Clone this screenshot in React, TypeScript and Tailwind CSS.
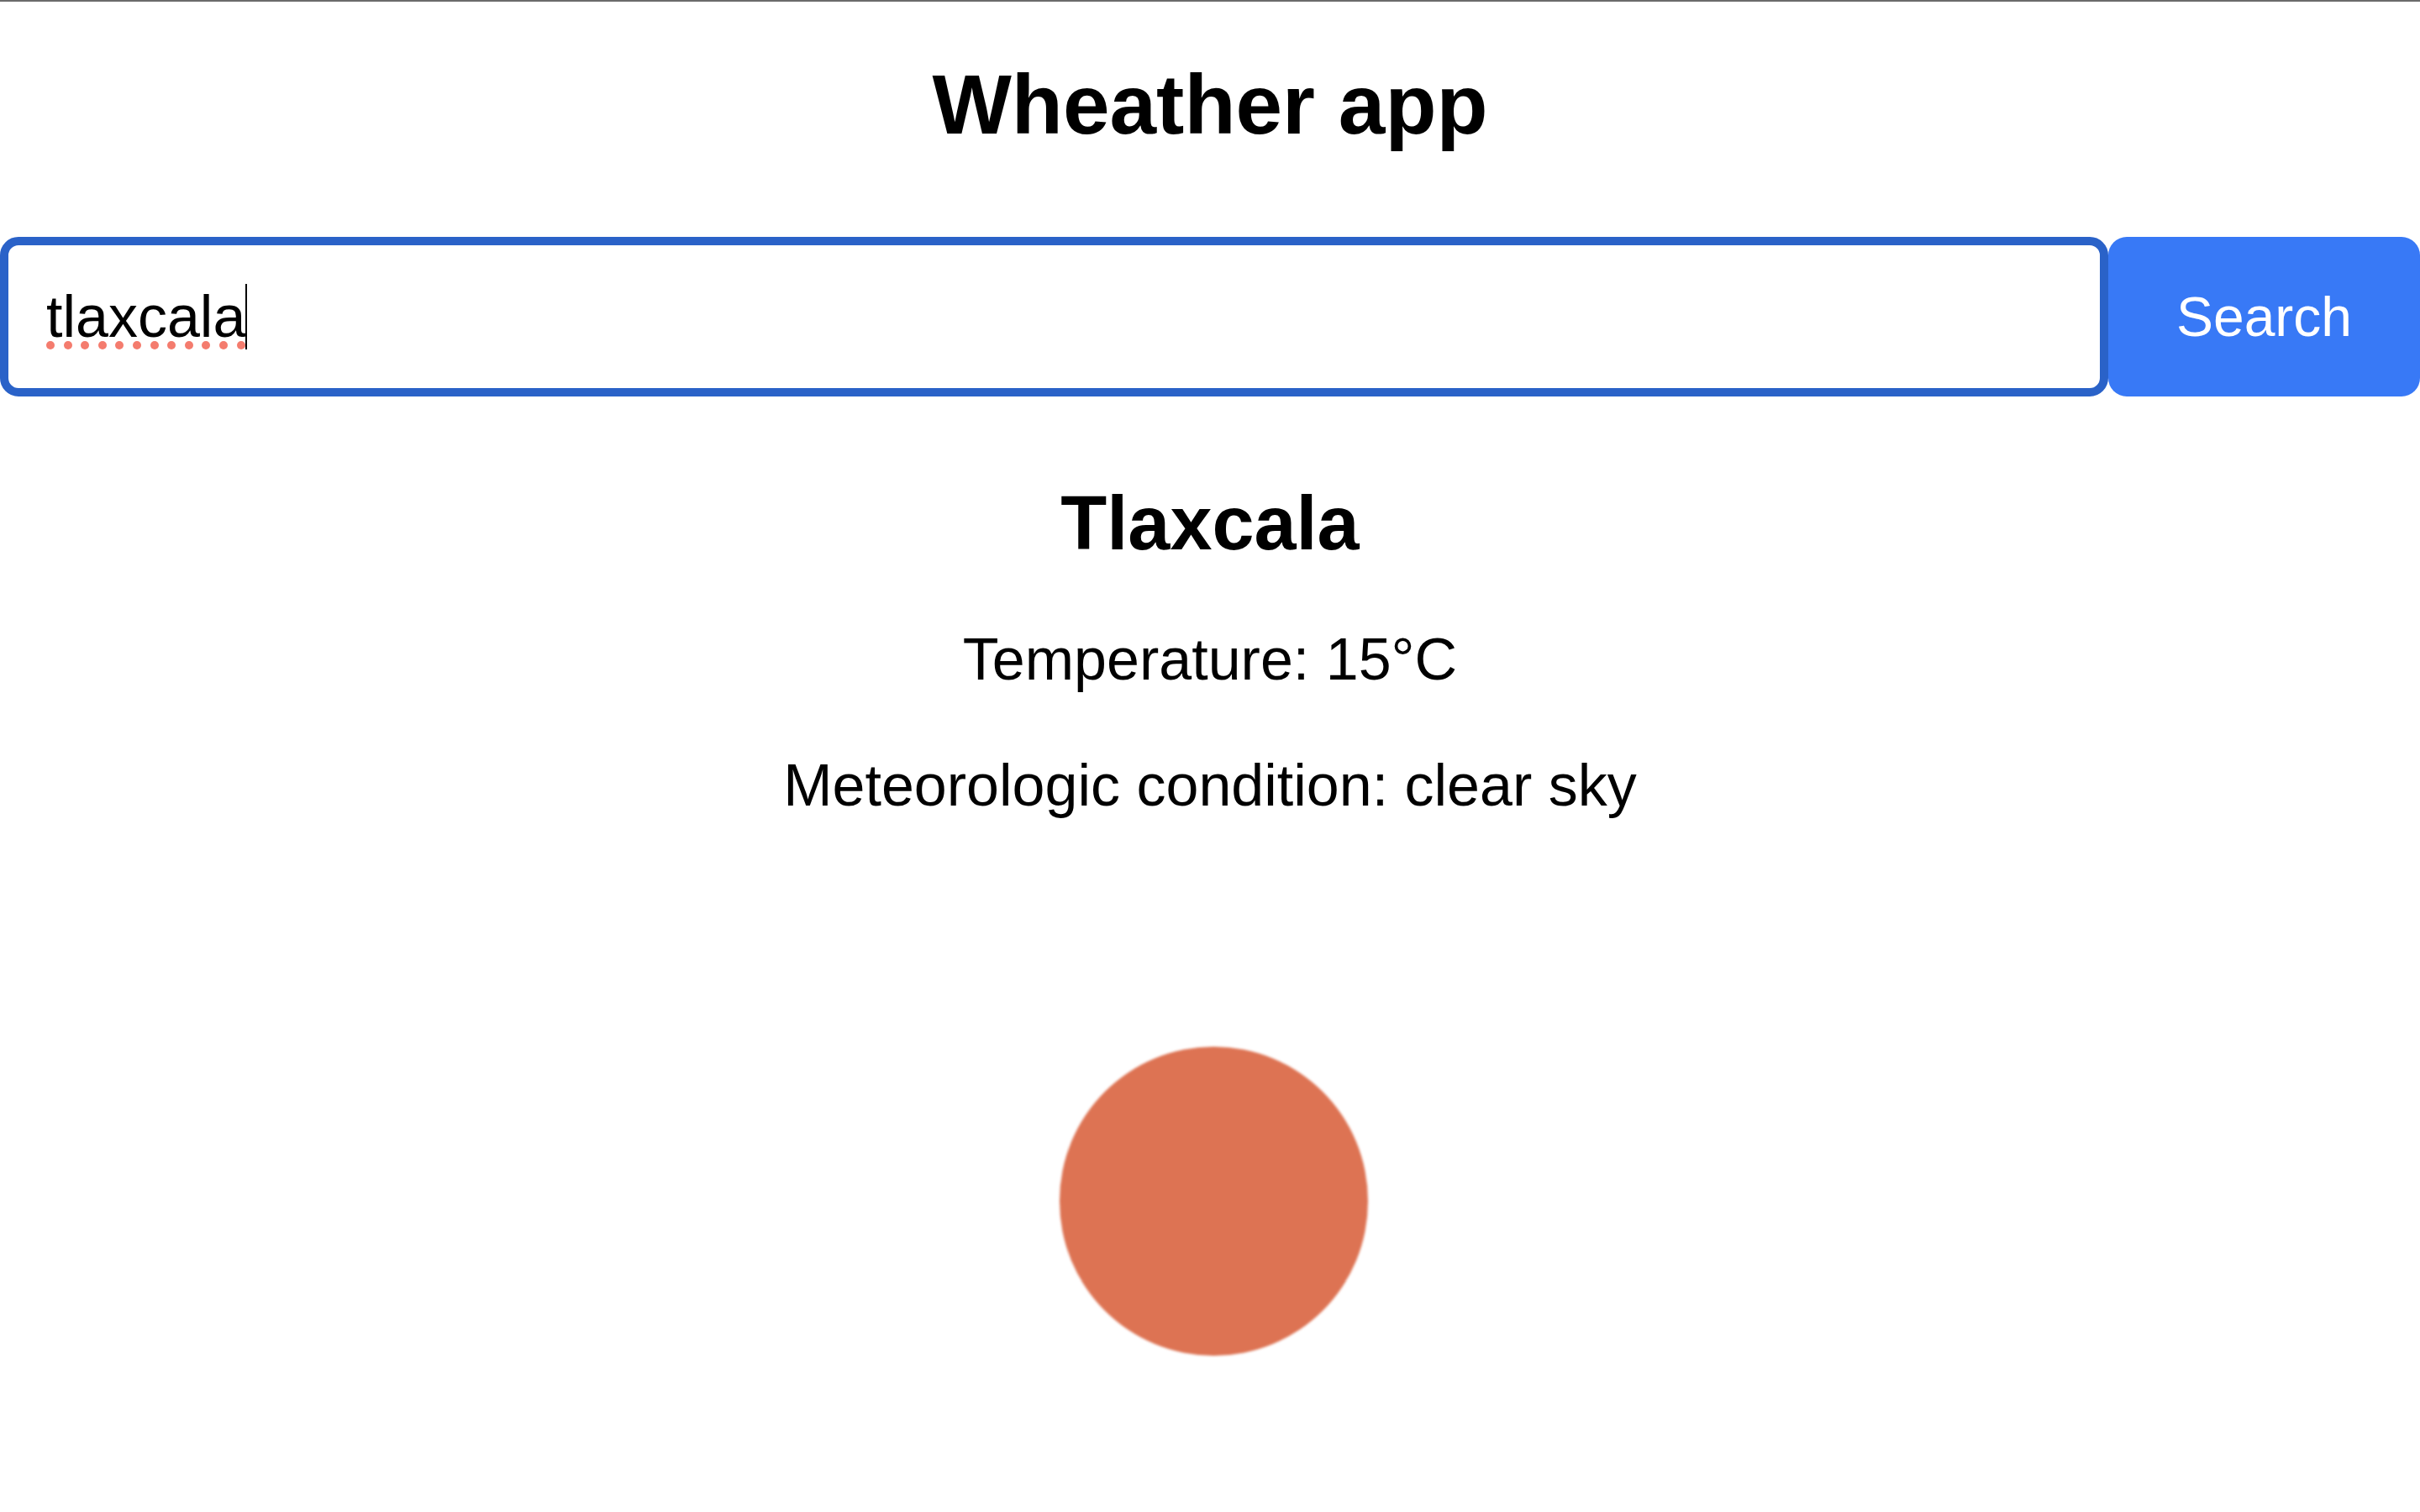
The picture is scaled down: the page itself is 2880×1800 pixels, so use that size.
const dots = Array.from({ length: 12 }, (_, i) => i);

const App = () => {
  return (
    <div className="min-h-screen bg-white text-black font-['Liberation_Sans',Arial,sans-serif] border-t-2 border-[#6b6b6b] flex flex-col items-center">
      <h1 className="mt-[62px] h-[120px] leading-[120px] text-[100px] font-bold">
        Wheather app
      </h1>
      <div className="mt-[98px] w-full flex">
        <div className="relative flex-1 h-[190px] border-[10px] border-[#2a62c8] rounded-[22px] flex items-center pl-[45px]">
          <span className="text-[70px] leading-none">tlaxcala</span>
          <span className="w-[2px] h-[78px] bg-black" />
          <div className="absolute left-[45px] top-[114px] flex gap-[10.6px]">
            {dots.map((d) => (
              <span key={d} className="w-[10px] h-[10px] rounded-full bg-[#f47c6e]" />
            ))}
          </div>
        </div>
        <button className="w-[371px] h-[190px] rounded-[22px] bg-[#3879f6] text-white text-[66px]">
          Search
        </button>
      </div>
      <h2 className="mt-[91px] h-[120px] leading-[120px] text-[90px] font-bold">
        Tlaxcala
      </h2>
      <p className="mt-[64px] h-[76px] leading-[76px] text-[70px]">
        Temperature: 15°C
      </p>
      <p className="mt-[74px] h-[76px] leading-[76px] text-[70px]">
        Meteorologic condition: clear sky
      </p>
      <div className="mt-[273px] ml-[8px] w-[367px] h-[368px] rounded-full bg-[#dd7353] blur-[1.5px]" />
    </div>
  );
};

export default App;
